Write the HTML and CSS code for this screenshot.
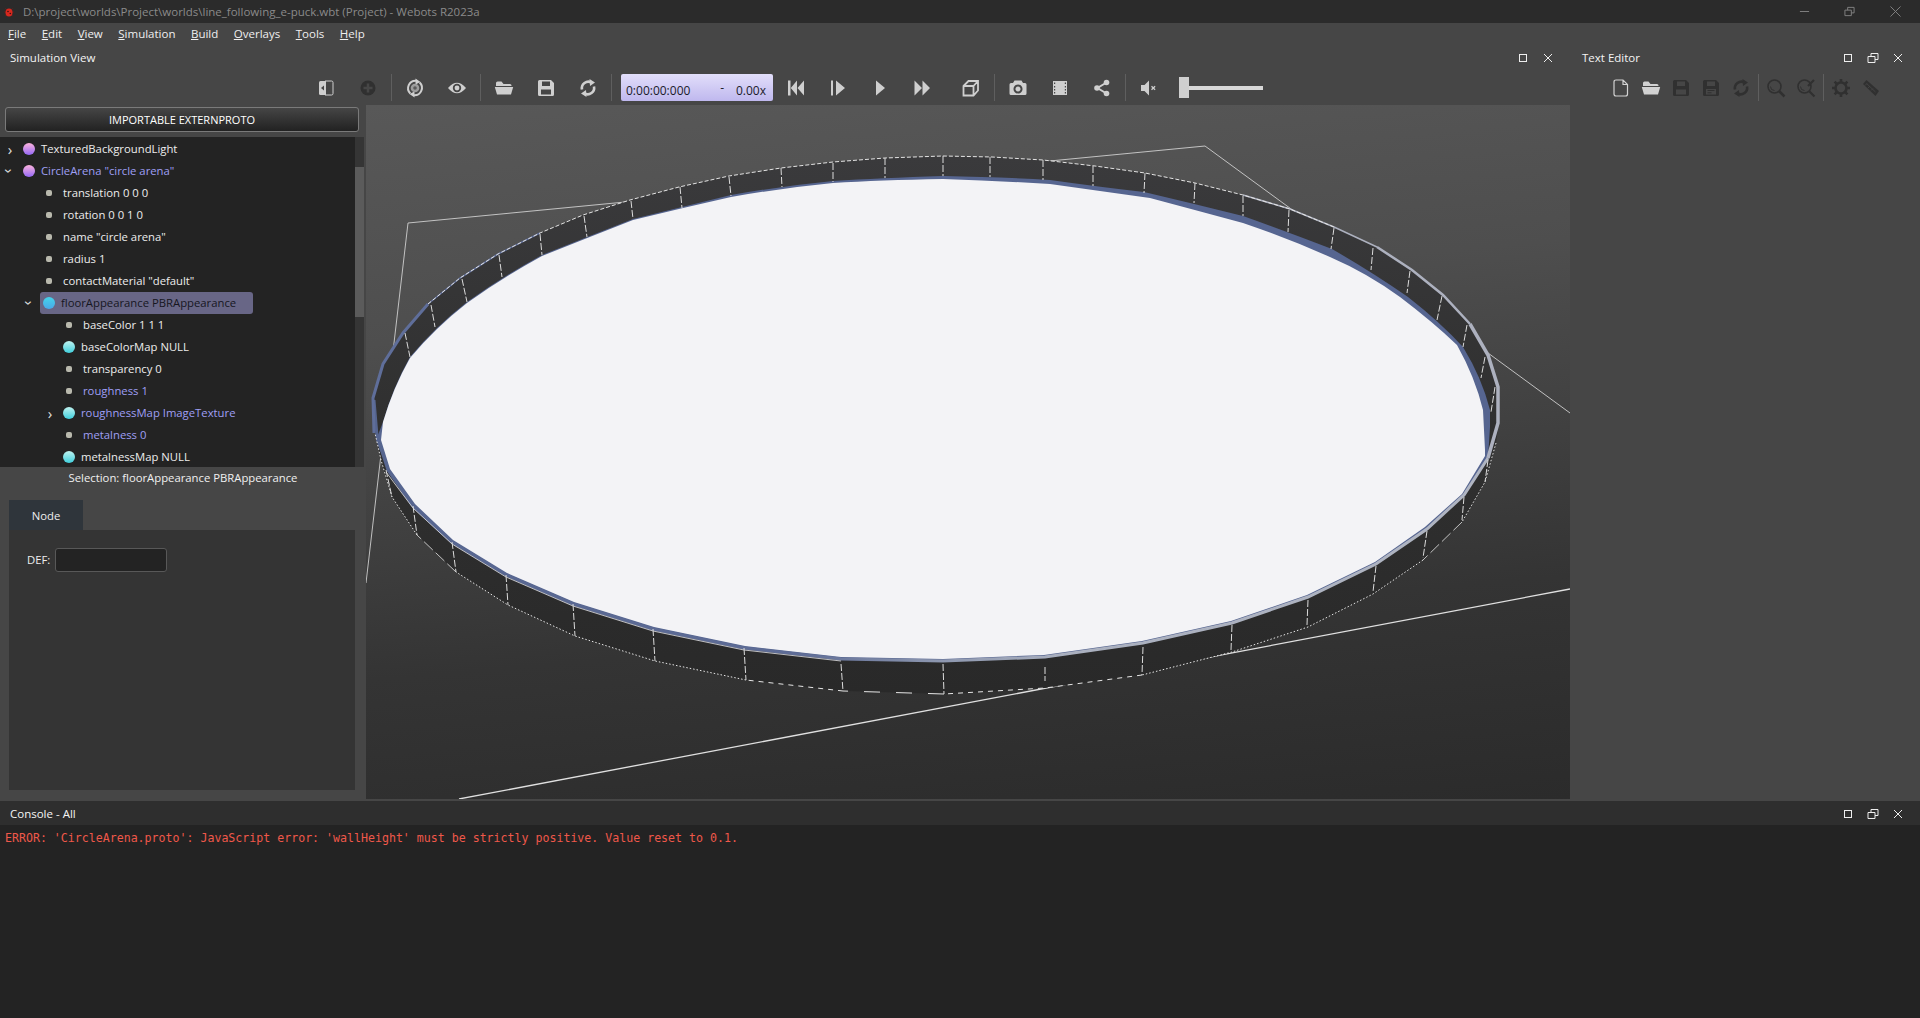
FILE: index.html
```html
<!DOCTYPE html>
<html lang="en">
<head>
<meta charset="utf-8">
<title>Webots R2023a</title>
<link rel="stylesheet" href="styles.css">
</head>
<body>
<svg class="defs" width="0" height="0" aria-hidden="true">
  <defs>
    <symbol id="i-max" viewBox="0 0 12 12"><rect x="2.5" y="2.5" width="7" height="7" fill="none" stroke="currentColor"/></symbol>
    <symbol id="i-float" viewBox="0 0 12 12"><path d="M1 4.500h7v6H1zM4 4.500V1.500h7v6H8" fill="none" stroke="currentColor"/></symbol>
    <symbol id="i-close" viewBox="0 0 12 12"><path d="M2 2l8 8M10 2l-8 8" fill="none" stroke="currentColor"/></symbol>
    <symbol id="i-toggle" viewBox="0 0 20 20"><path d="M9 3h6.500q1.500 0 1.500 1.500v11q0 1.500-1.500 1.500H9" fill="none" stroke="currentColor"/><path d="M4.500 3H10v14H4.500Q3 17 3 15.500v-11Q3 3 4.500 3z" fill="currentColor"/><path d="M8 7.500v5L5 10z" fill="#464646"/></symbol>
    <symbol id="i-plus" viewBox="0 0 20 20"><circle cx="10" cy="10" r="7.500" fill="currentColor"/><path d="M10 5.500v9M5.500 10h9" stroke="#464646" stroke-width="2.500"/></symbol>
    <symbol id="i-follow" viewBox="0 0 20 20"><path d="M11 2.700A7.500 7.500 0 0 0 5.300 15.500M9 17.300A7.500 7.500 0 0 0 14.700 4.500" fill="none" stroke="currentColor" stroke-width="2"/><path d="M10.500 .5l5 3.500-5 2.500zM9.500 19.500l-5-3.500 5-2.500z" fill="currentColor"/><circle cx="10" cy="10" r="4.300" fill="#9c9c9c"/><circle cx="10" cy="10" r="1.800" fill="#5a5a5a"/></symbol>
    <symbol id="i-eye" viewBox="0 0 20 20"><path d="M1 10q9-10.500 18 0q-9 10.500-18 0z" fill="currentColor"/><circle cx="10" cy="10" r="4.200" fill="#464646"/><circle cx="10" cy="10" r="2.400" fill="currentColor"/></symbol>
    <symbol id="i-open" viewBox="0 0 20 20"><path d="M2 5q0-1.500 1.500-1.500h4L9.500 6H16q1.500 0 1.500 1.500V8H2z" fill="currentColor"/><path d="M.8 9h18.400L17 16.500H3z" fill="currentColor"/></symbol>
    <symbol id="i-save" viewBox="0 0 20 20"><path fill-rule="evenodd" d="M3.500 2H15l3 3v11.500q0 1.500-1.500 1.500h-13Q2 18 2 16.500v-13Q2 2 3.500 2zM6 3.500V8h8V3.500zM5 11.500V16.500h10v-5z" fill="currentColor"/></symbol>
    <symbol id="i-saveas" viewBox="0 0 20 20"><path fill-rule="evenodd" d="M3.500 2H15l3 3v11.500q0 1.500-1.500 1.500h-13Q2 18 2 16.500v-13Q2 2 3.500 2zM6 3.500V8h8V3.500zM5 11v5.500h10V11z" fill="currentColor"/><path d="M6.500 12.500h7M6.500 14.800h4" stroke="currentColor"/></symbol>
    <symbol id="i-reload" viewBox="0 0 20 20"><path d="M4 11.500A6.500 6.500 0 0 1 13.500 4.500M16 8.500A6.500 6.500 0 0 1 6.500 15.500" fill="none" stroke="currentColor" stroke-width="2.600"/><path d="M11.500 1l5.500 3.500-5 3.500zM8.500 19L3 15.500l5-3.500z" fill="currentColor"/></symbol>
    <symbol id="i-first" viewBox="0 0 20 20"><path d="M2 2.500h2.500v15H2zM11 2.500v15L4.800 10zM18 2.500v15L11.500 10z" fill="currentColor"/></symbol>
    <symbol id="i-step" viewBox="0 0 20 20"><path d="M3 2.500h2v15H3zM8 2.500L17 10l-9 7.500z" fill="currentColor"/></symbol>
    <symbol id="i-play" viewBox="0 0 20 20"><path d="M6 2.500L15 10l-9 7.500z" fill="currentColor"/></symbol>
    <symbol id="i-fast" viewBox="0 0 20 20"><path d="M2.500 2.500L10 10l-7.500 7.500zM10.500 2.500L18 10l-7.500 7.500z" fill="currentColor"/></symbol>
    <symbol id="i-cube" viewBox="0 0 20 20"><path d="M2.500 8L7.500 3h9.500v9.500L12.500 17.500h-10zM2.500 8h10v9.500M12.500 8L17 3" fill="none" stroke="currentColor" stroke-width="1.800"/></symbol>
    <symbol id="i-camera" viewBox="0 0 20 20"><path fill-rule="evenodd" d="M3 5h2l1.500-2.500h7L15 5h2q1.500 0 1.500 1.500v9q0 1.500-1.500 1.500H3q-1.500 0-1.500-1.500v-9Q1.500 5 3 5zM10 6.500a4.500 4.500 0 1 0 .01 0zM10 8.500a2.500 2.500 0 1 1-.01 0z" fill="currentColor"/></symbol>
    <symbol id="i-film" viewBox="0 0 20 20"><path fill-rule="evenodd" d="M3 3h14v14H3zM4 4.500v1.500h1.200V4.500zM4 8v1.500h1.200V8zM4 11v1.500h1.200V11zM4 14v1.500h1.200V14zM14.800 4.500v1.500H16V4.500zM14.800 8v1.500H16V8zM14.800 11v1.500H16V11zM14.800 14v1.500H16V14z" fill="currentColor"/></symbol>
    <symbol id="i-share" viewBox="0 0 20 20"><path d="M14.500 4.500L5.500 10l9 5.500" fill="none" stroke="currentColor" stroke-width="2"/><circle cx="14.500" cy="4.500" r="2.800" fill="currentColor"/><circle cx="5" cy="10" r="2.800" fill="currentColor"/><circle cx="14.500" cy="15.500" r="2.800" fill="currentColor"/></symbol>
    <symbol id="i-mute" viewBox="0 0 20 20"><path d="M2 7h3.500L10 2.500v15L5.500 13H2z" fill="currentColor"/><path d="M12.500 8.200l3.600 3.600M16.100 8.200l-3.600 3.600" stroke="currentColor" stroke-width="1.300"/></symbol>
    <symbol id="i-new" viewBox="0 0 20 20"><path d="M5 2h7l4.500 4.500V16q0 2-2 2H5q-2 0-2-2V4q0-2 2-2zM12 2.500V6.500h4.500" fill="none" stroke="currentColor" stroke-width="1.200"/></symbol>
    <symbol id="i-find" viewBox="0 0 20 20"><circle cx="8.500" cy="8.500" r="6.500" fill="none" stroke="currentColor" stroke-width="1.600"/><path d="M13 13l5.500 5.500" stroke="currentColor" stroke-width="2.500"/><path d="M4.500 8.500a4 4 0 0 0 4 4" fill="none" stroke="currentColor"/></symbol>
    <symbol id="i-replace" viewBox="0 0 20 20"><circle cx="8.500" cy="8.500" r="6.500" fill="none" stroke="currentColor" stroke-width="1.600"/><path d="M13 13l5.500 5.500M12 8l6-6" stroke="currentColor" stroke-width="2.200"/><path d="M4.500 8.500a4 4 0 0 0 4 4" fill="none" stroke="currentColor"/></symbol>
    <symbol id="i-gear" viewBox="0 0 20 20"><circle cx="10" cy="10" r="5.500" fill="none" stroke="currentColor" stroke-width="2.600"/><path d="M10 1v3.500M10 15.500V19M1 10h3.500M15.500 10H19M3.600 3.600l2.500 2.500M13.900 13.900l2.500 2.500M16.400 3.600l-2.500 2.500M6.100 13.900l-2.500 2.500" stroke="currentColor" stroke-width="2.600"/></symbol>
    <symbol id="i-tag" viewBox="0 0 20 20"><path d="M2 6l3.500-4L18 13l-3.500 5z" fill="currentColor"/><path d="M5.500 5.500l9 8.500M4 7.500l2-2M7 10l2-2M10 12.500l2-2" stroke="#464646" stroke-width=".8"/></symbol>
  </defs>
</svg>

<div class="app">
  <header class="titlebar">
    <svg class="bug" viewBox="0 0 12 12" aria-hidden="true"><path d="M2 2l2 2M10 2L8 4M1 6h2M9 6h2M2 10l2-1M10 10L8 9" stroke="#5a2020" stroke-width=".8"/><ellipse cx="6" cy="6.500" rx="3.500" ry="4" fill="#d8281e"/><circle cx="5" cy="5.500" r=".8" fill="#3a1010"/><circle cx="7.300" cy="7.500" r=".8" fill="#3a1010"/></svg>
    <span class="window-title">D:\project\worlds\Project\worlds\line_following_e-puck.wbt (Project) - Webots R2023a</span>
    <div class="window-controls">
      <svg class="win-btn" viewBox="0 0 12 12"><path d="M1 6h10" stroke="currentColor"/></svg>
      <svg class="win-btn" viewBox="0 0 12 12"><use href="#i-float"/></svg>
      <svg class="win-btn" viewBox="0 0 12 12"><path d="M.5.500l11 11M11.500.500l-11 11" stroke="currentColor"/></svg>
    </div>
  </header>

  <nav class="menubar">
    <span class="menu"><u>F</u>ile</span>
    <span class="menu"><u>E</u>dit</span>
    <span class="menu"><u>V</u>iew</span>
    <span class="menu"><u>S</u>imulation</span>
    <span class="menu"><u>B</u>uild</span>
    <span class="menu"><u>O</u>verlays</span>
    <span class="menu"><u>T</u>ools</span>
    <span class="menu"><u>H</u>elp</span>
  </nav>

  <main class="workspace">
    <section class="sim">
      <div class="dock-head">
        <span class="dock-title">Simulation View</span>
        <div class="dock-btns">
          <svg class="dock-btn"><use href="#i-max"/></svg>
          <svg class="dock-btn"><use href="#i-close"/></svg>
        </div>
      </div>
      <div class="toolbar sim-toolbar">
        <button class="tb"><svg><use href="#i-toggle"/></svg></button>
        <button class="tb off"><svg><use href="#i-plus"/></svg></button>
        <i class="sep"></i>
        <button class="tb"><svg><use href="#i-follow"/></svg></button>
        <button class="tb"><svg><use href="#i-eye"/></svg></button>
        <i class="sep"></i>
        <button class="tb"><svg><use href="#i-open"/></svg></button>
        <button class="tb"><svg><use href="#i-save"/></svg></button>
        <button class="tb"><svg><use href="#i-reload"/></svg></button>
        <i class="sep"></i>
        <div class="timebox"><span>0:00:00:000</span><span class="dash">-</span><span>0.00x</span></div>
        <button class="tb"><svg><use href="#i-first"/></svg></button>
        <button class="tb"><svg><use href="#i-step"/></svg></button>
        <button class="tb"><svg><use href="#i-play"/></svg></button>
        <button class="tb"><svg><use href="#i-fast"/></svg></button>
        <button class="tb cube"><svg><use href="#i-cube"/></svg></button>
        <i class="sep"></i>
        <button class="tb"><svg><use href="#i-camera"/></svg></button>
        <button class="tb"><svg><use href="#i-film"/></svg></button>
        <button class="tb"><svg><use href="#i-share"/></svg></button>
        <i class="sep"></i>
        <button class="tb"><svg><use href="#i-mute"/></svg></button>
        <div class="slider"><i class="handle"></i><i class="track"></i></div>
      </div>
      <div class="sim-body">
        <aside class="scene">
          <button class="proto-btn">IMPORTABLE EXTERNPROTO</button>
          <div class="tree">
            <ul class="rows">
              <li class="row l0"><span class="chev">&#8250;</span><span class="item"><i class="ball purple"></i><span class="lbl node">TexturedBackgroundLight</span></span></li>
              <li class="row l0"><span class="chev open">&#8250;</span><span class="item"><i class="ball purple"></i><span class="lbl node mod">CircleArena "circle arena"</span></span></li>
              <li class="row l1"><span class="chev"></span><span class="item"><i class="dot"></i><span class="lbl">translation 0 0 0</span></span></li>
              <li class="row l1"><span class="chev"></span><span class="item"><i class="dot"></i><span class="lbl">rotation 0 0 1 0</span></span></li>
              <li class="row l1"><span class="chev"></span><span class="item"><i class="dot"></i><span class="lbl">name "circle arena"</span></span></li>
              <li class="row l1"><span class="chev"></span><span class="item"><i class="dot"></i><span class="lbl">radius 1</span></span></li>
              <li class="row l1"><span class="chev"></span><span class="item"><i class="dot"></i><span class="lbl">contactMaterial "default"</span></span></li>
              <li class="row l1"><span class="chev open">&#8250;</span><span class="item selected"><i class="ball blue"></i><span class="lbl node">floorAppearance PBRAppearance</span></span></li>
              <li class="row l2"><span class="chev"></span><span class="item"><i class="dot"></i><span class="lbl">baseColor 1 1 1</span></span></li>
              <li class="row l2"><span class="chev"></span><span class="item"><i class="ball cyan"></i><span class="lbl node">baseColorMap NULL</span></span></li>
              <li class="row l2"><span class="chev"></span><span class="item"><i class="dot"></i><span class="lbl">transparency 0</span></span></li>
              <li class="row l2"><span class="chev"></span><span class="item"><i class="dot"></i><span class="lbl mod">roughness 1</span></span></li>
              <li class="row l2"><span class="chev">&#8250;</span><span class="item"><i class="ball cyan"></i><span class="lbl node mod">roughnessMap ImageTexture</span></span></li>
              <li class="row l2"><span class="chev"></span><span class="item"><i class="dot"></i><span class="lbl mod">metalness 0</span></span></li>
              <li class="row l2"><span class="chev"></span><span class="item"><i class="ball cyan"></i><span class="lbl node">metalnessMap NULL</span></span></li>
            </ul>
            <div class="scrollbar"><i class="thumb"></i></div>
          </div>
          <div class="selection">Selection: floorAppearance PBRAppearance</div>
          <div class="tab">Node</div>
          <div class="pane">
            <label class="def-row">DEF:<span class="def-input"></span></label>
          </div>
        </aside>

        <div class="viewport">
          <svg class="scene3d" viewBox="366 105 1204 694" aria-label="3D view of a circular arena">
            <defs>
              <linearGradient id="wall" x1="0" y1="0" x2="0" y2="1"><stop offset="0" stop-color="#3a3a3c"/><stop offset=".5" stop-color="#303030"/><stop offset="1" stop-color="#292929"/></linearGradient>
              <linearGradient id="rim" gradientUnits="userSpaceOnUse" x1="376" y1="0" x2="1488" y2="0"><stop offset="0" stop-color="#56658f"/><stop offset=".38" stop-color="#5e6c96"/><stop offset=".5" stop-color="#8b95ae"/><stop offset=".62" stop-color="#aab0bf"/><stop offset="1" stop-color="#b0b5c2"/></linearGradient>
            </defs>
            <g class="box-lines">
              <path d="M1205 146L408 223L366 583"/>
              <path d="M1205 146L1570 413"/>
              <path class="thick" d="M459 799L1570 589"/>
            </g>
            <polygon fill="url(#wall)" points="373,398 383,364 403,333 428,304 460,278 498,254 540,233 583,215 630,200 679,187 729,176 781,168 833,162 885,158 943,156 992,157 1043,160 1095,166 1145,173 1195,183 1243,195 1290,209 1334,227 1377,247 1412,270 1443,295 1470,324 1488,355 1499,387 1499,423 1496,443 1485,482 1462,522 1423,560 1373,594 1308,627 1232,652 1142,675 1045,688 944,694 843,691 746,680 655,661 575,636 508,605 456,572 417,535 392,497 381,460 375,433"/>
            <path fill="#566590" d="M383 422Q393 387 410 357Q435 327 467 302Q502 277 542 255Q587 237 633 219Q682 207 731 195Q782 186 833 181Q880 178 943 176Q1000 177 1050 180Q1100 187 1144 192Q1195 204 1243 216Q1288 232 1332 249Q1372 272 1408 297Q1440 322 1463 347Q1482 378 1490 410L1490 427 1488 458 1464 495 1427 529 1376 564 1308 597 1232 623 1143 643 1045 657 943 661 841 659 744 648 653 629 573 604 506 575 452 542 413 506 388 470 376 440Z"/>
            <path fill="#f3f3f6" d="M383 422Q393 388 410 358Q435 328 467 303Q502 278 542 256Q587 238 633 220Q682 208 731 197Q782 188 833 183Q880 180 943 179Q1000 181 1050 184Q1100 191 1150 198Q1195 210 1243 223Q1287 238 1330 257Q1367 273 1400 297Q1433 322 1457 345Q1475 377 1483 410L1485 450 1485 456 1462 494 1425 527 1375 562 1307 595 1231 621 1142 641 1044 655 943 659 841 657 745 646 654 627 574 602 507 573 453 540 415 504 390 469 381 440Z"/>
            <polyline class="rim-front" points="1488,458 1464,495 1427,529 1376,564 1308,597 1232,623 1143,643 1045,657 943,661 841,659 744,648 653,629 573,604 506,575 452,542 413,506 388,470 377,436 374,400"/>
            <polyline class="rim-hair" points="841,661 744,650 653,631 573,606 506,577 452,544 413,508 386,472"/>
            <polyline class="rim-blue" points="374,433 373,398 383,364 403,333 428,304"/>
            <polyline class="rim-blue thin" points="428,304 460,278 498,254 540,233"/>
            <polyline class="rim-grey thin" points="1243,195 1290,209 1334,227 1377,247"/>
            <polyline class="rim-grey mid" points="1377,247 1412,270 1443,295 1470,324"/>
            <polyline class="rim-grey" points="1470,324 1488,355 1498,387 1498,423 1488,458"/>
            <polyline class="rim-dash" points="428,304 460,278 498,254 540,233 583,215 630,200 679,187 729,176 781,168 833,162 885,158 943,156 992,157 1043,160 1095,166 1145,173 1195,183 1243,195 1290,209 1334,227"/>
            <polyline class="dots" points="1496,443 1485,482 1462,522"/>
            <polyline class="dots" points="1423,560 1373,594 1308,627 1232,652"/>
            <polyline class="dots" points="1232,652 1142,675"/>
            <polyline class="dashes" points="1142,675 1045,688 944,694"/>
            <polyline class="long-dashes" points="944,694 843,691"/>
            <polyline class="dashes" points="843,691 746,680"/>
            <polyline class="dots" points="746,680 655,661 575,636 508,605 456,572"/>
            <polyline class="dots" points="417,535 392,497 381,460 375,433"/>
            <path class="edge" d="M1462 522L1423 560M456 572L417 535"/>
            <path class="ticks" d="M405 333L410 357M431 305L435 327M462 279L467 302M499 255L502 277M540 234L542 255M584 216L587 237M631 201L633 219M680 187L682 208M729 177L731 196M781 168L782 187M833 163L833 182M885 158L885 178M943 156L943 176M990 157L990 177M1043 160L1043 180M1093 166L1093 186M1145 173L1144 193M1195 183L1194 203M1243 196L1243 216M1289 210L1288 232M1334 228L1331 249M1373 248L1371 270M1410 271L1407 293M1442 296L1437 320M1467 325L1463 347M1485 357L1481 378M1495 387L1491 412"/>
            <path class="ticks" d="M386 470L392 497M413 506L417 535M452 542L456 572M506 575L508 605M573 604L575 636M653 629L655 661M744 648L746 680M841 664L843 691M943 664L944 694M1045 667L1045 681M1143 647L1142 675M1232 625L1231 650M1308 600L1307 625M1376 566L1373 592M1427 531L1423 558M1464 497L1462 520M1488 460L1485 482"/>
          </svg>
        </div>
      </div>
    </section>

    <section class="editor">
      <div class="dock-head">
        <span class="dock-title editor-title">Text Editor</span>
        <div class="dock-btns">
          <svg class="dock-btn"><use href="#i-max"/></svg>
          <svg class="dock-btn"><use href="#i-float"/></svg>
          <svg class="dock-btn"><use href="#i-close"/></svg>
        </div>
      </div>
      <div class="toolbar editor-toolbar">
        <button class="etb"><svg><use href="#i-new"/></svg></button>
        <button class="etb"><svg><use href="#i-open"/></svg></button>
        <button class="etb off"><svg><use href="#i-save"/></svg></button>
        <button class="etb off"><svg><use href="#i-saveas"/></svg></button>
        <button class="etb off"><svg><use href="#i-reload"/></svg></button>
        <i class="sep"></i>
        <button class="etb off"><svg><use href="#i-find"/></svg></button>
        <button class="etb off"><svg><use href="#i-replace"/></svg></button>
        <i class="sep"></i>
        <button class="etb off"><svg><use href="#i-gear"/></svg></button>
        <button class="etb off"><svg><use href="#i-tag"/></svg></button>
      </div>
    </section>
  </main>

  <section class="console">
    <div class="console-head">
      <span class="dock-title">Console - All</span>
      <div class="dock-btns">
        <svg class="dock-btn"><use href="#i-max"/></svg>
        <svg class="dock-btn"><use href="#i-float"/></svg>
        <svg class="dock-btn"><use href="#i-close"/></svg>
      </div>
    </div>
    <div class="console-body">ERROR: 'CircleArena.proto': JavaScript error: 'wallHeight' must be strictly positive. Value reset to 0.1.</div>
  </section>
</div>
</body>
</html>
```

FILE: styles.css
```css
* { box-sizing: border-box; }
html, body { margin: 0; height: 100%; overflow: hidden; }
body { background: #464646; color: #ececec; font: 11.5px/1.2 "Open Sans", "Noto Sans", sans-serif; }
.defs { position: absolute; }
.app { display: flex; flex-direction: column; height: 1018px; }

.titlebar { flex: 0 0 23px; display: flex; align-items: center; background: #2b2b2b; color: #8a8a8a; padding-left: 3px; }
.bug { width: 12px; height: 12px; margin-right: 8px; }
.window-title { flex: 1; }
.window-controls { display: flex; color: #858585; margin-right: 19.5px; }
.win-btn { width: 11px; height: 11px; margin-left: 34.5px; }

.menubar { flex: 0 0 24px; display: flex; align-items: center; padding: 0 0 2px 8px; color: #efefef; }
.menu { margin-right: 15.5px; }
.menu u { text-underline-offset: 1px; }

.workspace { flex: 0 0 754px; display: flex; min-height: 0; }
.sim { flex: 0 0 1570px; display: flex; flex-direction: column; min-width: 0; }
.editor { flex: 1; min-width: 0; }

.dock-head { height: 20px; display: flex; align-items: center; justify-content: space-between; padding: 1px 10px 0 10px; }
.dock-title { color: #f4f4f4; }
.editor-title { margin-left: 2px; }
.dock-btns { display: flex; }
.dock-btn { width: 12px; height: 12px; margin: 0 6.500px; color: #eee; }

.toolbar { display: flex; align-items: center; height: 38px; padding-top: 3px; }
.sim-toolbar { padding-left: 305px; }
.editor-toolbar { padding-left: 36px; }
.tb, .etb { border: 0; background: none; padding: 0; display: flex; align-items: center; justify-content: center; color: #cfcfcf; height: 28px; }
.tb { width: 42px; }
.etb { width: 30px; }
.tb svg, .etb svg { width: 20px; height: 20px; }
.tb.off, .etb.off { color: #303030; }
.etb { color: #d2d2d2; }
.sep { width: 1px; height: 27px; background: #5f5f5f; margin: 0 2px; }
.timebox { width: 152px; height: 27px; margin: 0 2px 0 7px; display: flex; align-items: flex-end; justify-content: space-between; padding: 0 7px 3px 5px; border-radius: 2px; background: linear-gradient(#e2defa, #bfb8ee); color: #1b1b2b; font-size: 12px; }
.dash { margin-left: 18px; padding-bottom: 3px; }
.cube { margin-left: 7px; }
.slider { display: flex; align-items: center; margin-left: 9px; }
.handle { width: 10px; height: 21px; background: #cfcfcf; }
.track { width: 74px; height: 4px; background: #d8d8d8; }

.sim-body { flex: 1; display: flex; min-height: 0; }
.scene { flex: 0 0 366px; display: flex; flex-direction: column; min-height: 0; font-size: 11.3px; }
.proto-btn { margin: 2px 7px 0 5px; height: 25px; flex: none; border: 1px solid #7a7a7a; border-radius: 3px; background: linear-gradient(#454545, #222); color: #fff; font: inherit; font-size: 11px; }
.tree { margin: 5px 2px 0 0; height: 330px; flex: none; display: flex; overflow: hidden; background: #232323; }
.rows { flex: 1; list-style: none; margin: 0; padding: 1px 0 0; overflow: hidden; }
.row { height: 22px; display: flex; align-items: center; white-space: nowrap; }
.l1 { padding-left: 20px; }
.l2 { padding-left: 40px; }
.chev { flex: 0 0 20px; text-align: center; color: #e0e0e0; font-size: 15px; line-height: 22px; }
.chev.open { transform: rotate(90deg); }
.item { display: flex; align-items: center; height: 22px; padding-right: 17px; border-radius: 3px; }
.selected { background: #686686; }
.selected .lbl { color: #16161f; }
.dot { flex: 0 0 6px; height: 6px; margin: 0 11px 0 6px; border-radius: 2px; background: #b9b9ad; }
.ball { flex: 0 0 12px; height: 12px; margin: 0 6px 0 3px; border-radius: 50%; }
.purple { background: linear-gradient(#fdb3dd, #9468f6); }
.cyan { background: linear-gradient(#bff3f0, #3fcfdc); }
.blue { background: linear-gradient(#45d4ea, #49a8e8); }
.lbl { color: #ededed; }
.mod { color: #9f9ff4; }
.scrollbar { flex: 0 0 9px; background: #353535; padding-top: 30px; }
.thumb { display: block; height: 150px; background: #5b5b5b; }
.selection { height: 22px; flex: none; display: flex; align-items: center; justify-content: center; color: #f0f0f0; }
.tab { flex: none; width: 74px; height: 30px; margin: 11px 0 0 9px; padding-top: 1px; display: flex; align-items: center; justify-content: center; background: #2f353b; color: #eee; }
.pane { flex: none; height: 260px; margin: 0 11px 0 9px; background: #343434; padding: 18px 0 0 18px; }
.def-row { display: flex; align-items: center; color: #eee; }
.def-input { width: 112px; height: 24px; margin-left: 5px; background: #232323; border: 1px solid #585858; border-radius: 3px; }

.viewport { flex: 1; min-width: 0; background: linear-gradient(175deg, #585858 0%, #4e4e4e 30%, #3f3f3f 55%, #343434 72%, #2b2b2b 100%); height: 694px; }
.scene3d { display: block; width: 1204px; height: 694px; }
.box-lines path { fill: none; stroke: #cfcfcf; stroke-width: .9; }
.box-lines .thick { stroke: #e0e0e0; stroke-width: 1.300; }
.rim-front { fill: none; stroke: url(#rim); stroke-width: 3; }
.rim-hair { fill: none; stroke: #e6e6ea; stroke-width: .8; }
.rim-blue { fill: none; stroke: #5f6e9a; stroke-width: 3; }
.rim-blue.thin { stroke-width: 1.500; }
.rim-grey { fill: none; stroke: #adb1bf; stroke-width: 3.500; }
.rim-grey.mid { stroke-width: 2.500; }
.rim-grey.thin { stroke-width: 1.500; }
.rim-dash { fill: none; stroke: #e4e4e4; stroke-width: 1; stroke-dasharray: 4 2; }
.dots, .dashes, .long-dashes, .edge, .ticks { fill: none; stroke: #e6e6e6; stroke-width: 1; }
.dots { stroke-dasharray: 1.500 2; }
.dashes { stroke-dasharray: 5 5; }
.long-dashes { stroke-dasharray: 16 16; }
.edge { stroke-dasharray: 12 4; stroke-width: .8; }
.ticks { stroke-dasharray: 7 2; stroke: #dcdcdc; }

.console { flex: 1; display: flex; flex-direction: column; min-height: 0; }
.console-head { flex: 0 0 24px; display: flex; align-items: center; justify-content: space-between; padding: 1px 10px 0 10px; background: #2e2e2e; }
.console-body { flex: 1; background: #232323; color: #f0584a; font: 11.600px/26px "DejaVu Sans Mono", monospace; padding-left: 5px; white-space: pre; }
```
